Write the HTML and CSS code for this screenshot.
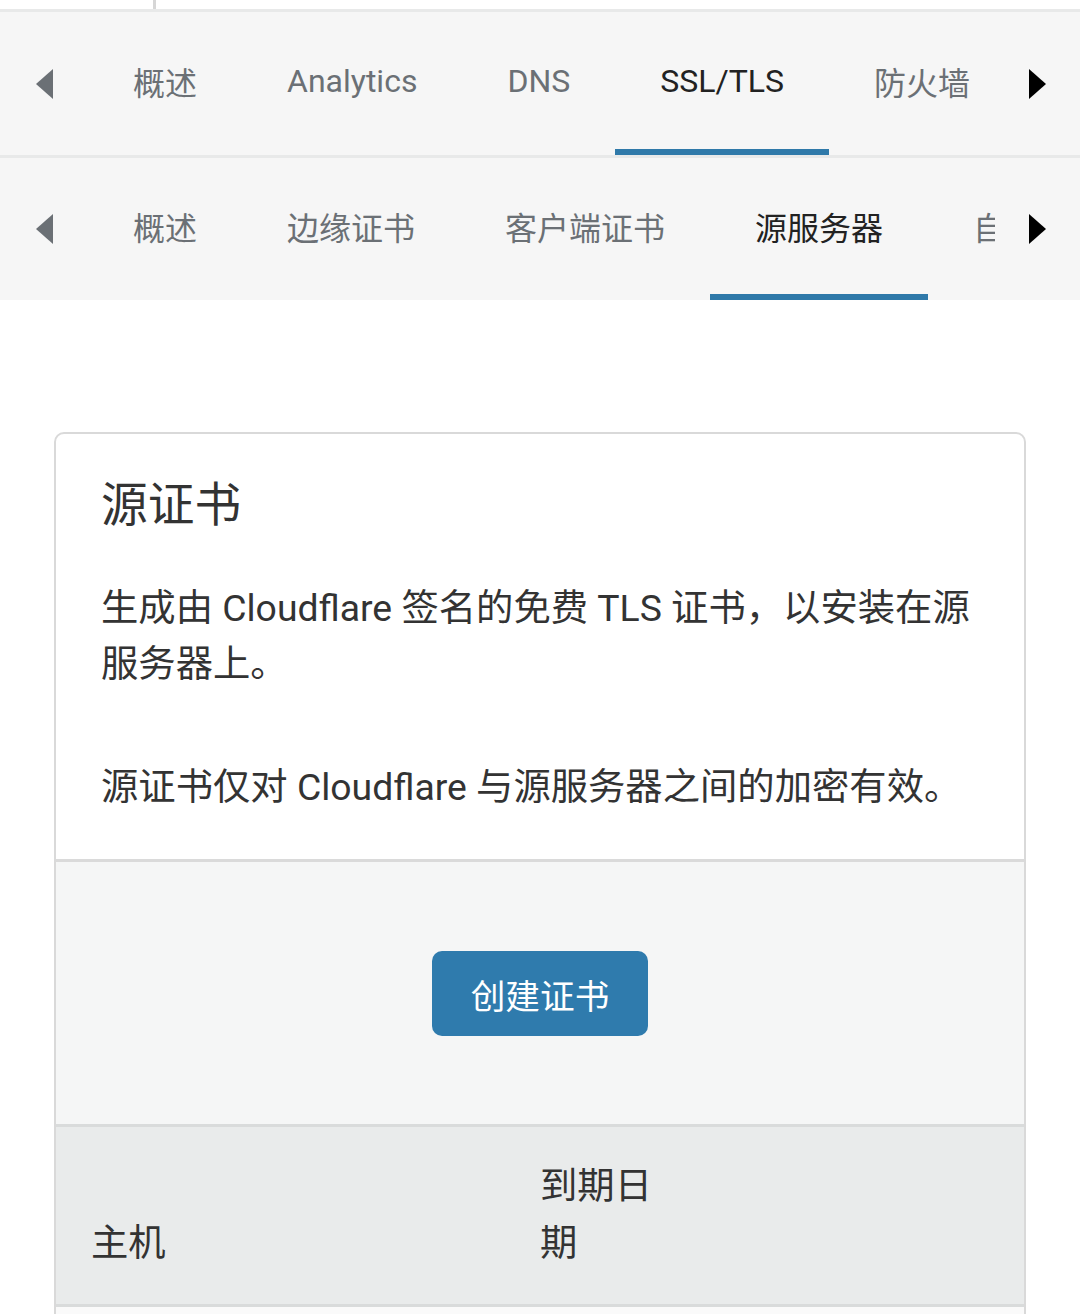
FILE: index.html
```html
<!DOCTYPE html>
<html lang="zh-CN">
<head>
<meta charset="utf-8">
<title>SSL/TLS 源服务器</title>
<link rel="stylesheet" href="styles.css">
</head>
<body>
<div class="topstrip">
  <div class="topstrip-left"></div>
  <div class="topstrip-right"></div>
</div>

<nav class="tabbar tabbar-main">
  <button class="arrow arrow-left" aria-label="上一个">
    <svg width="17" height="30" viewBox="0 0 17 30"><path d="M17 0 L17 30 L0 15 Z" fill="#6b7075"/></svg>
  </button>
  <div class="tabs">
    <a class="tab">概述</a>
    <a class="tab">Analytics</a>
    <a class="tab">DNS</a>
    <a class="tab active">SSL/TLS</a>
    <a class="tab">防火墙</a>
  </div>
  <button class="arrow arrow-right" aria-label="下一个">
    <svg width="17" height="30" viewBox="0 0 17 30"><path d="M0 0 L0 30 L17 15 Z" fill="#000"/></svg>
  </button>
</nav>

<nav class="tabbar tabbar-sub">
  <button class="arrow arrow-left" aria-label="上一个">
    <svg width="17" height="30" viewBox="0 0 17 30"><path d="M17 0 L17 30 L0 15 Z" fill="#6b7075"/></svg>
  </button>
  <div class="tabs">
    <a class="tab">概述</a>
    <a class="tab">边缘证书</a>
    <a class="tab">客户端证书</a>
    <a class="tab active">源服务器</a>
    <a class="tab">自定义主机名</a>
  </div>
  <button class="arrow arrow-right" aria-label="下一个">
    <svg width="17" height="30" viewBox="0 0 17 30"><path d="M0 0 L0 30 L17 15 Z" fill="#000"/></svg>
  </button>
</nav>

<main class="content">
  <section class="card">
    <div class="card-body">
      <h2 class="card-title">源证书</h2>
      <p class="card-text">生成由 Cloudflare 签名的免费 TLS 证书，以安装在源服务器上。</p>
      <p class="card-text card-text-second">源证书仅对 Cloudflare 与源服务器之间的加密有效。</p>
    </div>
    <div class="card-actions">
      <button class="btn-primary">创建证书</button>
    </div>
    <table class="cert-table">
      <colgroup>
        <col class="col-host">
        <col class="col-date">
        <col>
      </colgroup>
      <thead>
        <tr>
          <th>主机</th>
          <th>到期日期</th>
          <th></th>
        </tr>
      </thead>
      <tbody>
        <tr><td></td><td></td><td></td></tr>
      </tbody>
    </table>
  </section>
</main>
</body>
</html>
```
FILE: styles.css
```css
* {
  box-sizing: border-box;
}

html, body {
  margin: 0;
  padding: 0;
  background: #ffffff;
  font-family: Roboto, "Noto Sans CJK SC", "Noto Sans", sans-serif;
  color: #333;
}

body {
  height: 1314px;
  overflow: hidden;
}

.topstrip {
  display: flex;
  height: 9px;
  background: #fff;
}

.topstrip-left {
  width: 156px;
  border-right: 3px solid #d6d6d6;
}

.topstrip-right {
  flex: 1;
}

.tabbar {
  display: flex;
  align-items: stretch;
  background: #f6f6f6;
}

.tabbar-main {
  height: 149px;
  border-top: 3px solid #e8e9e9;
  border-bottom: 3px solid #e8e9e9;
}

.tabbar-sub {
  height: 142px;
}

.arrow {
  border: 0;
  background: transparent;
  padding: 0;
  display: flex;
  align-items: center;
  justify-content: center;
}

.arrow-left {
  width: 88px;
  flex: 0 0 88px;
}

.arrow-right {
  width: 85px;
  flex: 0 0 85px;
}

.tabs {
  flex: 1;
  display: flex;
  overflow: hidden;
  white-space: nowrap;
}

.tab {
  flex: 0 0 auto;
  display: flex;
  align-items: center;
  padding: 0 45px;
  font-size: 32px;
  color: #6b7075;
  border-bottom: 6px solid transparent;
}

.tab.active {
  color: #222;
  border-bottom-color: #2f79a9;
}

.content {
  padding: 132px 54px 0;
}

.card {
  border: 2px solid #d9d9d9;
  border-radius: 10px;
  background: #fff;
  overflow: hidden;
}

.card-body {
  padding: 41px 45px 44px;
}

.card-title {
  margin: 0;
  font-size: 46.7px;
  line-height: 60px;
  font-weight: 400;
  color: #333;
}

.card-text {
  margin: 45px 0 0;
  font-size: 37.33px;
  line-height: 56px;
  color: #333;
}

.card-text-second {
  margin-top: 67px;
}

.card-actions {
  border-top: 3px solid #dadada;
  background: #f5f6f6;
  display: flex;
  justify-content: center;
  padding: 89px 0 88px;
}

.btn-primary {
  height: 85px;
  padding: 0 39px;
  border: 0;
  border-radius: 10px;
  background: #2f7bad;
  color: #fff;
  font-family: Roboto, "Noto Sans CJK SC", sans-serif;
  font-size: 34.67px;
}

.cert-table {
  width: 100%;
  border-collapse: collapse;
  table-layout: fixed;
}

.col-host {
  width: 449px;
}

.col-date {
  width: 184px;
}

.cert-table thead tr {
  background: #e9ebeb;
  border-top: 3px solid #d9dbdb;
  border-bottom: 3px solid #d9dbdb;
}

.cert-table th {
  text-align: left;
  font-weight: 400;
  font-size: 37.33px;
  line-height: 57px;
  color: #333;
  padding: 31px 35px 32px;
  vertical-align: bottom;
}

.cert-table tbody tr {
  background: #fafafa;
}

.cert-table td {
  height: 60px;
}
```
